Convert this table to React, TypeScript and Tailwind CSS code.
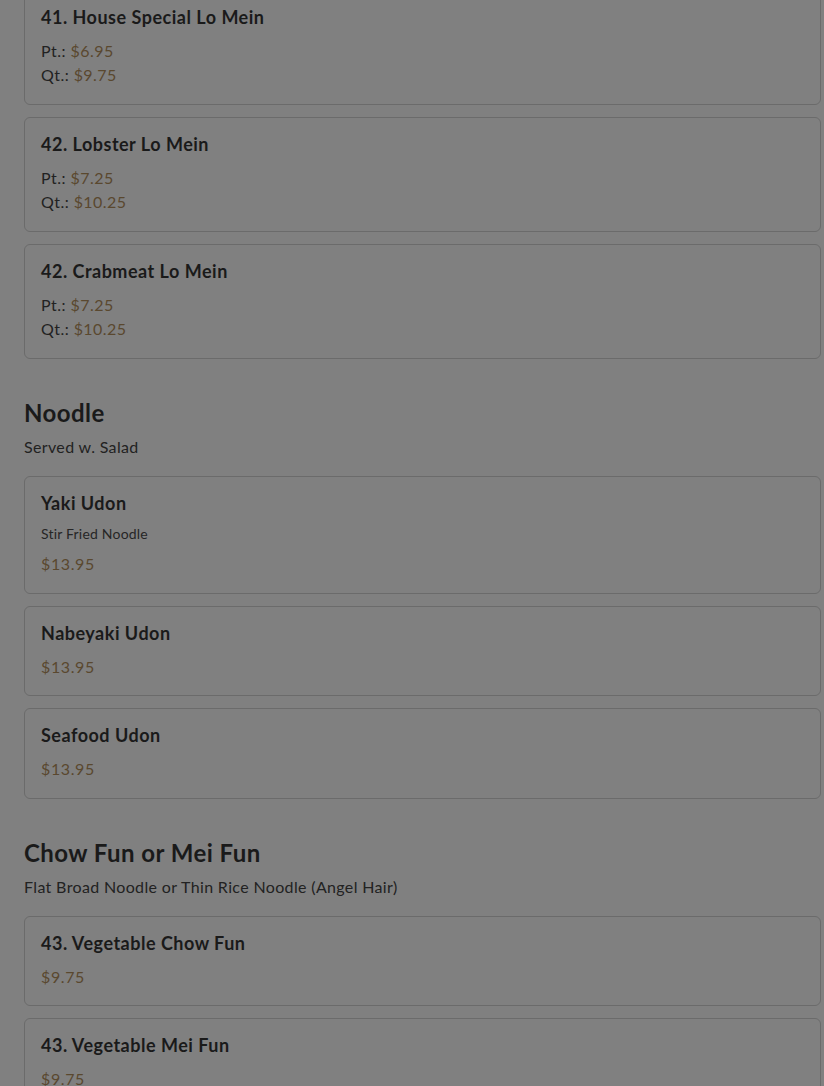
const sections = [
  {
    title: '',
    subtitle: '',
    items: [
      { name: '41. House Special Lo Mein', pt: '$6.95', qt: '$9.75' },
      { name: '42. Lobster Lo Mein', pt: '$7.25', qt: '$10.25' },
      { name: '42. Crabmeat Lo Mein', pt: '$7.25', qt: '$10.25' },
    ],
  },
  {
    title: 'Noodle',
    subtitle: 'Served w. Salad',
    items: [
      { name: 'Yaki Udon', desc: 'Stir Fried Noodle', price: '$13.95' },
      { name: 'Nabeyaki Udon', price: '$13.95' },
      { name: 'Seafood Udon', price: '$13.95' },
    ],
  },
  {
    title: 'Chow Fun or Mei Fun',
    subtitle: 'Flat Broad Noodle or Thin Rice Noodle (Angel Hair)',
    items: [
      { name: '43. Vegetable Chow Fun', price: '$9.75' },
      { name: '43. Vegetable Mei Fun', price: '$9.75' },
    ],
  },
]

type Item = { name: string, desc?: string, price?: string, pt?: string, qt?: string }

function MenuCard({ item }: { item: Item }) {
  return (
    <div className={`w-[797px] mb-3 rounded-md border border-[#6b6b6b] px-4 pt-4 ${item.pt ? 'pb-[17px]' : 'pb-[16.5px]'}`}>
      <h3 className="text-lg font-bold leading-[20px] tracking-[0.5px] text-[#1a1a1a]">{item.name}</h3>
      {item.desc && (
        <p className="mt-[11px] text-sm leading-5 tracking-[0.2px] text-[#262626]">{item.desc}</p>
      )}
      {item.price && (
        <p className={`${item.desc ? 'mt-2' : 'mt-3'} text-base leading-6 tracking-[0.6px] text-[#5a482f]`}>{item.price}</p>
      )}
      {item.pt && (
        <div className="mt-3 text-base leading-6 tracking-[0.45px]">
          <p className="text-[#222]">Pt.: <span className="text-[#5a482f]">{item.pt}</span></p>
          <p className="text-[#222]">Qt.: <span className="text-[#5a482f]">{item.qt}</span></p>
        </div>
      )}
    </div>
  )
}

export default function App() {
  return (
    <div className="min-h-screen bg-[#808080] overflow-hidden" style={{ fontFamily: 'Lato, "Open Sans", sans-serif' }}>
      <div className="-mt-[10px] pl-6">
        {sections.map((section, i) => (
          <div key={i} className={section.title ? 'mt-[38px]' : ''}>
            {section.title && (
              <>
                <h2 className="text-2xl font-bold leading-8 tracking-[0.45px] text-[#1a1a1a]">{section.title}</h2>
                <p className="mt-1.5 mb-[17px] text-base leading-6 tracking-[0.35px] text-[#222]">{section.subtitle}</p>
              </>
            )}
            {section.items.map(item => (
              <MenuCard key={item.name} item={item} />
            ))}
          </div>
        ))}
      </div>
    </div>
  )
}
